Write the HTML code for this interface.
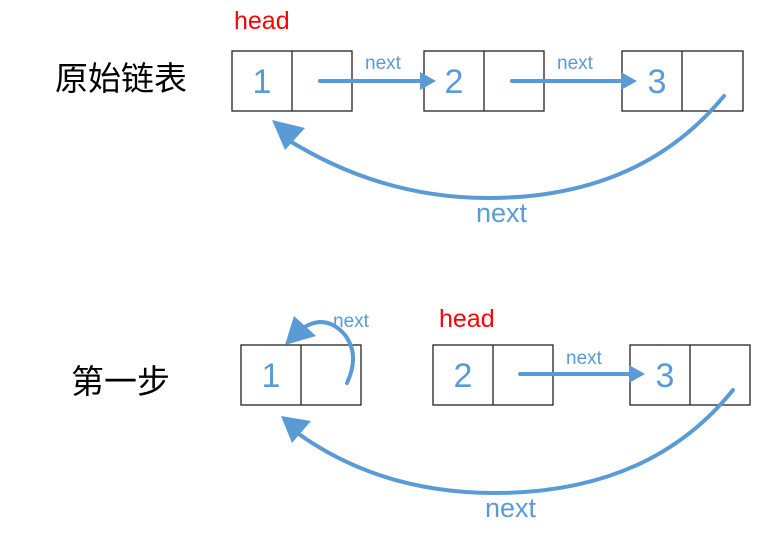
<!DOCTYPE html>
<html><head><meta charset="utf-8"><style>
html,body{margin:0;padding:0;background:#fff;width:779px;height:534px;overflow:hidden}
svg{display:block}
.cn{font-family:"Liberation Sans","Noto Sans CJK SC",sans-serif;font-size:33px;fill:#000}
.num{font-family:"Liberation Sans",sans-serif;font-size:34px;fill:#5b9bd5}
.nx{font-family:"Liberation Sans",sans-serif;fill:#5b9bd5}
.hd{font-family:"Liberation Sans",sans-serif;font-size:25px;fill:#ff0000}
</style></head><body>
<svg width="779" height="534" viewBox="0 0 779 534" xmlns="http://www.w3.org/2000/svg">
<g fill="#fff" stroke="#222" stroke-width="1.3">
<rect x="232" y="51" width="120" height="60"/><line x1="292" y1="51" x2="292" y2="111"/>
<rect x="424" y="51" width="120" height="60"/><line x1="484" y1="51" x2="484" y2="111"/>
<rect x="622" y="51" width="121" height="60"/><line x1="682" y1="51" x2="682" y2="111"/>
<rect x="241" y="345" width="120" height="60"/><line x1="301" y1="345" x2="301" y2="405"/>
<rect x="433" y="345" width="120" height="60"/><line x1="493" y1="345" x2="493" y2="405"/>
<rect x="630" y="345" width="120" height="60"/><line x1="690" y1="345" x2="690" y2="405"/>
</g>
<text class="cn" x="55" y="90">原始链表</text>
<text class="cn" x="71" y="393">第一步</text>
<text class="hd" x="234" y="29">head</text>
<text class="hd" x="439" y="327">head</text>
<g class="num" text-anchor="middle">
<text x="262" y="93">1</text><text x="454" y="93">2</text><text x="657" y="93">3</text>
<text x="271" y="387">1</text><text x="463" y="387">2</text><text x="665" y="387">3</text>
</g>
<g stroke="#5b9bd5" stroke-width="4" fill="none" stroke-linecap="round">
<line x1="320" y1="81" x2="422" y2="81"/>
<line x1="512" y1="81" x2="622" y2="81"/>
<path d="M724 96 Q640 198 488 198 Q380 198 285 138"/>
<line x1="520" y1="374" x2="630" y2="374"/>
<path d="M347 383 Q360 355 345 335 Q325 312 300 330"/>
<path d="M733 390 Q650 493 495 493 Q380 493 296 432"/>
</g>
<g fill="#5b9bd5">
<polygon points="436,81 420,72 420,90"/>
<polygon points="637,81 621,72 621,90"/>
<polygon points="272,120 285,150 305,128"/>
<polygon points="645,374 629,365 629,383"/>
<polygon points="285,345 294,316 316,336"/>
<polygon points="281,416 292,443 311,421"/>
</g>
<text class="nx" x="365" y="69" font-size="19">next</text>
<text class="nx" x="557" y="69" font-size="19">next</text>
<text class="nx" x="476" y="222" font-size="27">next</text>
<text class="nx" x="333" y="327" font-size="19">next</text>
<text class="nx" x="566" y="364" font-size="19">next</text>
<text class="nx" x="485" y="517" font-size="27">next</text>
</svg>
</body></html>
